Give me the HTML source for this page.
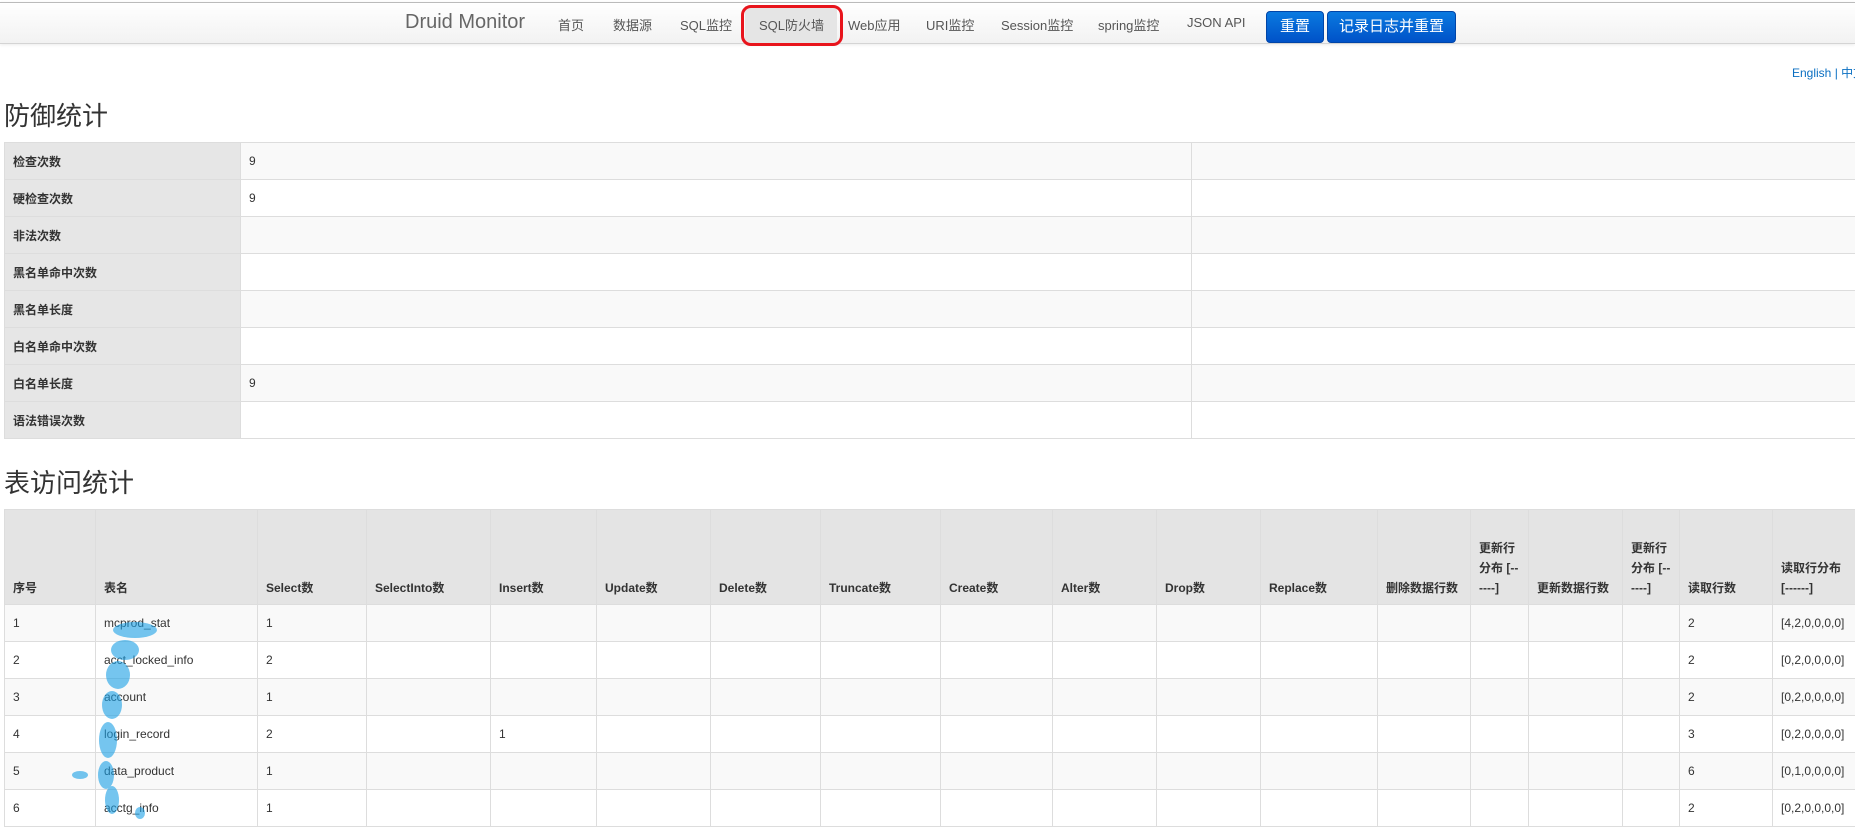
<!DOCTYPE html>
<html><head><meta charset="utf-8"><style>
body{margin:0;width:1855px;height:823px;overflow:hidden;background:#fff;font-family:"Liberation Sans","Noto Sans CJK SC",sans-serif;font-size:13px;color:#333;position:relative}
.nav{position:absolute;left:0;top:2px;width:1855px;height:40px;background:linear-gradient(#fff,#f2f2f2);border-top:1px solid #bbb;border-bottom:1px solid #d4d4d4;box-shadow:0 1px 3px rgba(0,0,0,.08)}
.nav span{position:absolute;top:12px;color:#555;font-size:13px}
.brand{font-size:20px!important;top:8px!important;color:#666!important}
.act{position:absolute;left:745px;top:3px;width:92px;height:37px;background:#e5e5e5}
.ring{position:absolute;left:741px;top:5px;width:96px;height:35px;border:3px solid #e8141c;border-radius:10px}
.btn{position:absolute;top:8px;height:30px;background:linear-gradient(#0a7ae0,#0052c8);border:1px solid #0045a8;border-radius:4px;color:#fff;font-size:15px;line-height:30px;text-align:center}
h2{position:absolute;left:4px;margin:0;font-size:26px;font-weight:normal;color:#333}
table{position:absolute;left:4px;border-collapse:collapse;table-layout:fixed}
td,th{border:1px solid #ddd;padding:0 8px;text-align:left;font-size:12px}
.t1 td{height:36px}
.t1 td.l{background:#e6e6e6;font-weight:bold}
.t1 tr:nth-child(odd) td{background-color:#f9f9f9}
.t1 tr:nth-child(odd) td.l{background:#e6e6e6}
.t2 th{background:#e4e4e4;height:88px;vertical-align:bottom;padding-bottom:6px;line-height:20px;font-weight:bold}
.t2 td{height:36px}
.t2 tr:nth-child(even) td{background:#f9f9f9}
</style></head><body>
<div class="nav">
<div class="act"></div>
<span class="brand" style="left:405px">Druid Monitor</span>
<span style="left:558px">首页</span>
<span style="left:613px">数据源</span>
<span style="left:680px">SQL监控</span>
<span style="left:759px">SQL防火墙</span>
<span style="left:848px">Web应用</span>
<span style="left:926px">URI监控</span>
<span style="left:1001px">Session监控</span>
<span style="left:1098px">spring监控</span>
<span style="left:1187px">JSON API</span>
<div class="btn" style="left:1266px;width:56px">重置</div>
<div class="btn" style="left:1327px;width:127px">记录日志并重置</div>
</div>
<div class="ring"></div>
<div style="position:absolute;left:1792px;top:64px;font-size:12px;color:#0a6fc2;white-space:nowrap">English | 中文</div>
<h2 style="top:96px">防御统计</h2>
<table class="t1" style="top:142px;width:1900px">
<colgroup><col style="width:236px"><col style="width:951px"><col></colgroup>
<tr><td class="l">检查次数</td><td>9</td><td></td></tr>
<tr><td class="l">硬检查次数</td><td>9</td><td></td></tr>
<tr><td class="l">非法次数</td><td></td><td></td></tr>
<tr><td class="l">黑名单命中次数</td><td></td><td></td></tr>
<tr><td class="l">黑名单长度</td><td></td><td></td></tr>
<tr><td class="l">白名单命中次数</td><td></td><td></td></tr>
<tr><td class="l">白名单长度</td><td>9</td><td></td></tr>
<tr><td class="l">语法错误次数</td><td></td><td></td></tr>
</table>
<h2 style="top:463px">表访问统计</h2>
<table class="t2" style="top:509px;width:1900px">
<colgroup><col style="width:91px"><col style="width:162px"><col style="width:109px"><col style="width:124px"><col style="width:106px"><col style="width:114px"><col style="width:110px"><col style="width:120px"><col style="width:112px"><col style="width:104px"><col style="width:104px"><col style="width:117px"><col style="width:93px"><col style="width:58px"><col style="width:94px"><col style="width:57px"><col style="width:93px"><col></colgroup>
<tr><th>序号</th><th>表名</th><th>Select数</th><th>SelectInto数</th><th>Insert数</th><th>Update数</th><th>Delete数</th><th>Truncate数</th><th>Create数</th><th>Alter数</th><th>Drop数</th><th>Replace数</th><th>删除数据行数</th><th>更新行分布 [------]</th><th>更新数据行数</th><th>更新行分布 [------]</th><th>读取行数</th><th style="white-space:nowrap">读取行分布<br>[------]</th></tr>
<tr><td>1</td><td>mcprod_stat</td><td>1</td><td></td><td></td><td></td><td></td><td></td><td></td><td></td><td></td><td></td><td></td><td></td><td></td><td></td><td>2</td><td>[4,2,0,0,0,0]</td></tr>
<tr><td>2</td><td>acct_locked_info</td><td>2</td><td></td><td></td><td></td><td></td><td></td><td></td><td></td><td></td><td></td><td></td><td></td><td></td><td></td><td>2</td><td>[0,2,0,0,0,0]</td></tr>
<tr><td>3</td><td>account</td><td>1</td><td></td><td></td><td></td><td></td><td></td><td></td><td></td><td></td><td></td><td></td><td></td><td></td><td></td><td>2</td><td>[0,2,0,0,0,0]</td></tr>
<tr><td>4</td><td>login_record</td><td>2</td><td></td><td>1</td><td></td><td></td><td></td><td></td><td></td><td></td><td></td><td></td><td></td><td></td><td></td><td>3</td><td>[0,2,0,0,0,0]</td></tr>
<tr><td>5</td><td>data_product</td><td>1</td><td></td><td></td><td></td><td></td><td></td><td></td><td></td><td></td><td></td><td></td><td></td><td></td><td></td><td>6</td><td>[0,1,0,0,0,0]</td></tr>
<tr><td>6</td><td>acctg_info</td><td>1</td><td></td><td></td><td></td><td></td><td></td><td></td><td></td><td></td><td></td><td></td><td></td><td></td><td></td><td>2</td><td>[0,2,0,0,0,0]</td></tr>
</table>
<svg style="position:absolute;left:0;top:0" width="1855" height="823"><g fill="#1aa0e6" opacity=".6">
<ellipse cx="135" cy="630" rx="22" ry="8"/><ellipse cx="125" cy="650" rx="14" ry="10"/><ellipse cx="118" cy="675" rx="12" ry="14"/><ellipse cx="112" cy="705" rx="10" ry="14"/><ellipse cx="108" cy="740" rx="9" ry="18"/><ellipse cx="106" cy="775" rx="8" ry="14"/><ellipse cx="112" cy="800" rx="7" ry="14"/><ellipse cx="80" cy="775" rx="8" ry="4"/><ellipse cx="140" cy="813" rx="5" ry="6"/></g></svg>
</body></html>
